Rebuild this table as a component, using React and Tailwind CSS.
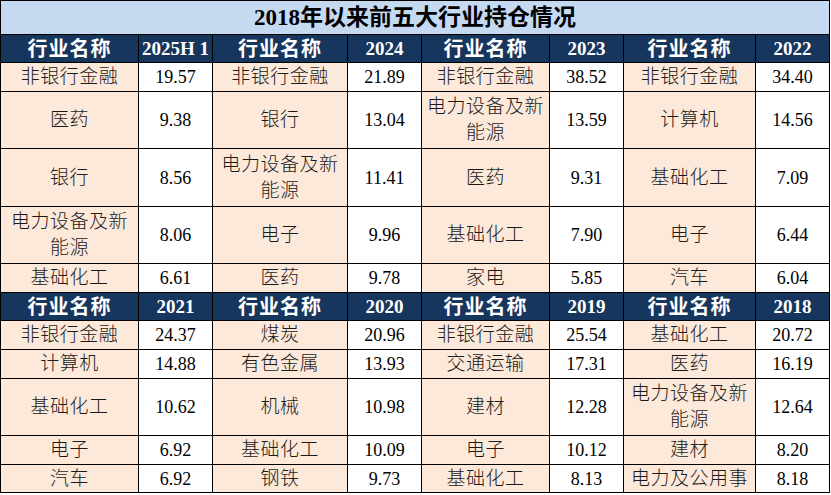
import React from "react";

const serif = {
  fontFamily: '"Liberation Serif", "Noto Sans CJK SC", serif',
};

const cols = [138, 74, 135, 74, 128, 74, 132, 74];

const blocks = [
  {
    years: ["2025H 1", "2024", "2023", "2022"],
    rows: [
      { h: "h-[29px]", cells: [["非银行金融", "19.57"], ["非银行金融", "21.89"], ["非银行金融", "38.52"], ["非银行金融", "34.40"]] },
      { h: "h-[57px]", cells: [["医药", "9.38"], ["银行", "13.04"], ["电力设备及新|能源", "13.59"], ["计算机", "14.56"]] },
      { h: "h-[58px]", cells: [["银行", "8.56"], ["电力设备及新|能源", "11.41"], ["医药", "9.31"], ["基础化工", "7.09"]] },
      { h: "h-[57px]", cells: [["电力设备及新|能源", "8.06"], ["电子", "9.96"], ["基础化工", "7.90"], ["电子", "6.44"]] },
      { h: "h-[29px]", cells: [["基础化工", "6.61"], ["医药", "9.78"], ["家电", "5.85"], ["汽车", "6.04"]] },
    ],
  },
  {
    years: ["2021", "2020", "2019", "2018"],
    rows: [
      { h: "h-[29px]", cells: [["非银行金融", "24.37"], ["煤炭", "20.96"], ["非银行金融", "25.54"], ["基础化工", "20.72"]] },
      { h: "h-[29px]", cells: [["计算机", "14.88"], ["有色金属", "13.93"], ["交通运输", "17.31"], ["医药", "16.19"]] },
      { h: "h-[57px]", cells: [["基础化工", "10.62"], ["机械", "10.98"], ["建材", "12.28"], ["电力设备及新|能源", "12.64"]] },
      { h: "h-[29px]", cells: [["电子", "6.92"], ["基础化工", "10.09"], ["电子", "10.12"], ["建材", "8.20"]] },
      { h: "h-[28px]", cells: [["汽车", "6.92"], ["钢铁", "9.73"], ["基础化工", "8.13"], ["电力及公用事", "8.18"]] },
    ],
  },
];

function Name({ text }) {
  const lines = text.split("|");
  return (
    <td className="border border-black bg-[#fde9d9] text-center text-[19px] font-light text-[#1a1a1a] tracking-[0.5px] whitespace-nowrap overflow-hidden p-0">
      {lines.map((l, i) => (
        <div key={i} className={lines.length > 1 ? "leading-[26px]" : "leading-[20px]"}>
          {l}
        </div>
      ))}
    </td>
  );
}

export default function App() {
  return (
    <div className="w-[831px] h-[495px] bg-white overflow-hidden" style={serif}>
      <table className="table-fixed border-collapse w-[830px]">
        <colgroup>
          {cols.map((w, i) => (
            <col key={i} style={{ width: w }} />
          ))}
        </colgroup>
        <tbody>
          <tr className="h-[34px]">
            <td
              colSpan={8}
              className="border border-black bg-[#c5d9f1] text-center text-[23px] leading-[24px] font-bold text-black p-0"
            >
              2018年以来前五大行业持仓情况
            </td>
          </tr>
          {blocks.map((b, bi) => (
            <React.Fragment key={bi}>
              <tr className="h-[28px]">
                {b.years.map((y) => (
                  <React.Fragment key={y}>
                    <td className="border border-black bg-[#17365d] text-center text-[20px] leading-[20px] font-bold text-white tracking-[1px] p-0">
                      行业名称
                    </td>
                    <td className="border border-black bg-[#17365d] text-center text-[19px] leading-[20px] font-bold text-white p-0 whitespace-nowrap">
                      {y}
                    </td>
                  </React.Fragment>
                ))}
              </tr>
              {b.rows.map((r, ri) => (
                <tr key={ri} className={r.h}>
                  {r.cells.map(([n, v], ci) => (
                    <React.Fragment key={ci}>
                      <Name text={n} />
                      <td className="border border-black bg-white text-center text-[18px] leading-[20px] text-black p-0">
                        {v}
                      </td>
                    </React.Fragment>
                  ))}
                </tr>
              ))}
            </React.Fragment>
          ))}
        </tbody>
      </table>
    </div>
  );
}
